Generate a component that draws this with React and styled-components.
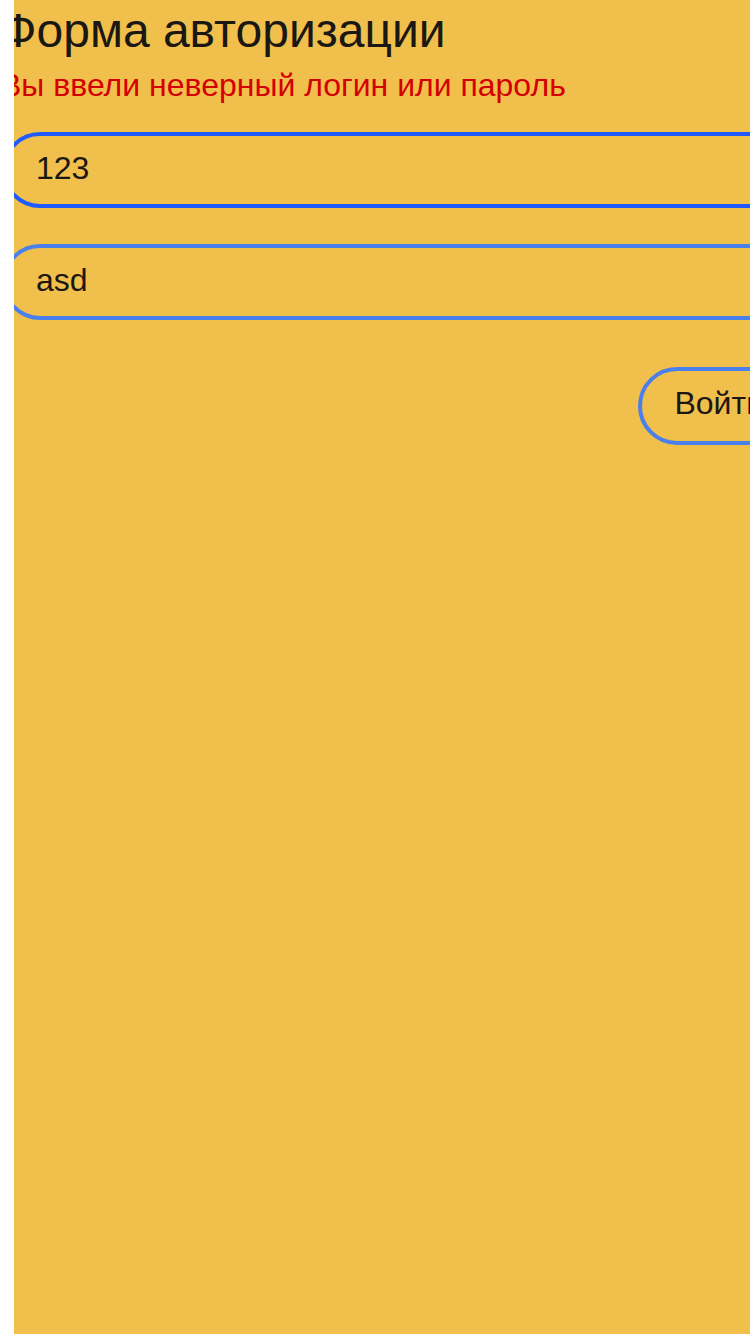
import React from "react";
import styled, { createGlobalStyle } from "styled-components";

const GlobalStyle = createGlobalStyle`
  html, body { margin: 0; padding: 0; background: #ffffff; }
  body { font-family: "Liberation Sans", Arial, sans-serif; }
`;

const Viewport = styled.div`
  margin-left: 14px;
  min-height: 1334px;
  background: #f1bf4b;
  overflow: hidden;
`;

const Form = styled.form`
  margin-left: -12px;
  width: 798px;
  padding-top: 3px;
  display: flex;
  flex-direction: column;
`;

const Header = styled.header`
  margin-left: -2px;
  display: flex;
  flex-direction: column;
  gap: 9px;
`;

const Title = styled.h1`
  margin: 0;
  font-size: 48px;
  font-weight: 400;
  line-height: 1.15;
  color: #1b1712;
`;

const Error = styled.p`
  margin: 0;
  font-size: 32px;
  line-height: 1.15;
  color: #d40000;
`;

const Field = styled.input`
  box-sizing: border-box;
  height: 76px;
  width: 100%;
  margin-top: ${(p) => p.$gap}px;
  padding: 0 30px 3px;
  border: 4px solid ${(p) => (p.$focused ? "#1f5bff" : "#4a7fee")};
  border-radius: 38px;
  background: transparent;
  font-family: "Liberation Sans", Arial, sans-serif;
  font-size: 32px;
  color: #1b1712;
  outline: none;
`;

const Actions = styled.div`
  display: flex;
  justify-content: flex-end;
  margin-top: 47px;
`;

const Button = styled.button`
  box-sizing: border-box;
  height: 78px;
  padding: 0 32px 4px;
  border: 4px solid #4a7fee;
  border-radius: 39px;
  background: transparent;
  font-family: "Liberation Sans", Arial, sans-serif;
  font-size: 32px;
  color: #1b1712;
  cursor: pointer;
`;

export default function App() {
  return (
    <>
      <GlobalStyle />
      <Viewport>
        <Form onSubmit={(e) => e.preventDefault()}>
          <Header>
            <Title>Форма авторизации</Title>
            <Error>Вы ввели неверный логин или пароль</Error>
          </Header>
          <Field $gap={28} $focused defaultValue="123" />
          <Field $gap={36} type="text" defaultValue="asd" />
          <Actions>
            <Button type="submit">Войти</Button>
          </Actions>
        </Form>
      </Viewport>
    </>
  );
}
